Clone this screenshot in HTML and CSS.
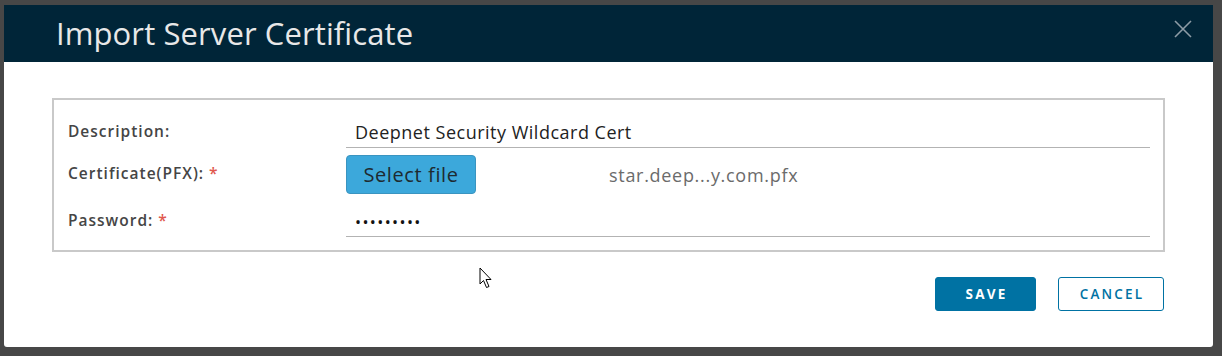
FILE: index.html
```html
<!DOCTYPE html>
<html>
<head>
<meta charset="utf-8">
<link rel="stylesheet" href="styles.css">
</head>
<body>
<div class="modal">
  <div class="modal-header">
    <h1 class="title">Import Server Certificate</h1>
    <button class="close" aria-label="Close">
      <svg width="18" height="18" viewBox="0 0 18 18"><path d="M1 1 L17 17 M17 1 L1 17" stroke="#8d9ca6" stroke-width="1.6" fill="none"/></svg>
    </button>
  </div>
  <div class="modal-body">
    <div class="form-box">
      <div class="label">Description:</div>
      <div class="field input"><span class="value">Deepnet Security Wildcard Cert</span></div>
      <div class="label">Certificate(PFX): <span class="req">*</span></div>
      <div class="field file">
        <button class="select-btn">Select file</button>
        <span class="filename">star.deep...y.com.pfx</span>
      </div>
      <div class="label last">Password: <span class="req">*</span></div>
      <div class="field input last"><span class="dots">•••••••••</span></div>
    </div>
    <div class="footer">
      <button class="btn btn-primary">SAVE</button>
      <button class="btn btn-outline">CANCEL</button>
    </div>
  </div>
  <svg class="cursor" width="14" height="22" viewBox="0 0 14 22"><path d="M1 1 L1 17 L4.5 13.5 L7.5 20.5 L10 19.5 L7 12.5 L12 12.5 Z" fill="#fff" stroke="#000" stroke-width="1" stroke-linejoin="round"/></svg>
</div>
</body>
</html>
```
FILE: styles.css
```css
html, body {
  margin: 0;
  padding: 0;
  background: #474747;
  height: 100%;
  overflow: hidden;
}
body {
  padding: 5px 9px 0 4px;
  font-family: "Open Sans", "Noto Sans", sans-serif;
}
.modal {
  position: relative;
  width: 1209px;
  height: 342px;
  background: #fff;
  border-radius: 0 0 3px 3px;
}
.modal-header {
  height: 57px;
  background: #002538;
  display: flex;
  align-items: center;
  justify-content: space-between;
  padding: 0 21px 0 52px;
  box-sizing: border-box;
}
.title {
  margin: 0 0 1px 0;
  font-weight: 400;
  font-size: 31px;
  color: #e8e8e8;
  letter-spacing: 0.1px;
}
.close {
  background: none;
  border: 0;
  padding: 0;
  margin-top: -10px;
  display: flex;
}
.modal-body {
  padding: 36px 48px 0 48px;
}
.form-box {
  border: 2px solid #c9c9c9;
  padding: 16px 13px 13px 14px;
  display: grid;
  grid-template-columns: 278px 1fr;
  grid-template-rows: 32px 39px 36px;
  row-gap: 7px;
  align-items: center;
}
.label {
  font-size: 15.5px;
  font-weight: 600;
  color: #454545;
  letter-spacing: 1px;
  margin-bottom: 3px;
}
.label.last {
  margin-bottom: 0;
  margin-top: 1px;
}
.req {
  color: #e0574d;
  font-weight: 600;
}
.field.input {
  height: 32px;
  box-sizing: border-box;
  border-bottom: 1px solid #b3b3b3;
  display: flex;
  align-items: center;
  padding-left: 9px;
}
.field.input.last {
  align-self: end;
}
.value {
  font-size: 18px;
  letter-spacing: 0.5px;
  color: #222;
}
.dots {
  font-size: 16px;
  letter-spacing: 1.4px;
  color: #111;
  padding-top: 2px;
}
.field.file {
  display: flex;
  align-items: center;
  height: 39px;
}
.select-btn {
  width: 130px;
  height: 39px;
  background: #3ca8db;
  border: 1px solid #3a94c0;
  border-radius: 4px;
  font-family: inherit;
  font-size: 20px;
  letter-spacing: 0.6px;
  color: #1e2a30;
  padding: 0;
}
.filename {
  margin-left: 133px;
  font-size: 18px;
  letter-spacing: 0.7px;
  color: #6b6b6b;
}
.footer {
  display: flex;
  justify-content: flex-end;
  gap: 22px;
  margin-top: 25px;
  padding-right: 1px;
}
.btn {
  height: 34px;
  border-radius: 3px;
  font-family: inherit;
  font-size: 13.5px;
  letter-spacing: 2.2px;
  padding: 0 0 0 2px;
  box-sizing: border-box;
}
.btn-primary {
  width: 101px;
  background: #0072a3;
  border: 1px solid #0072a3;
  color: #fff;
  font-weight: 700;
}
.btn-outline {
  width: 106px;
  background: #fff;
  border: 1px solid #0072a3;
  color: #0072a3;
  font-weight: 600;
}
.cursor {
  position: absolute;
  left: 475px;
  top: 262px;
}
```
